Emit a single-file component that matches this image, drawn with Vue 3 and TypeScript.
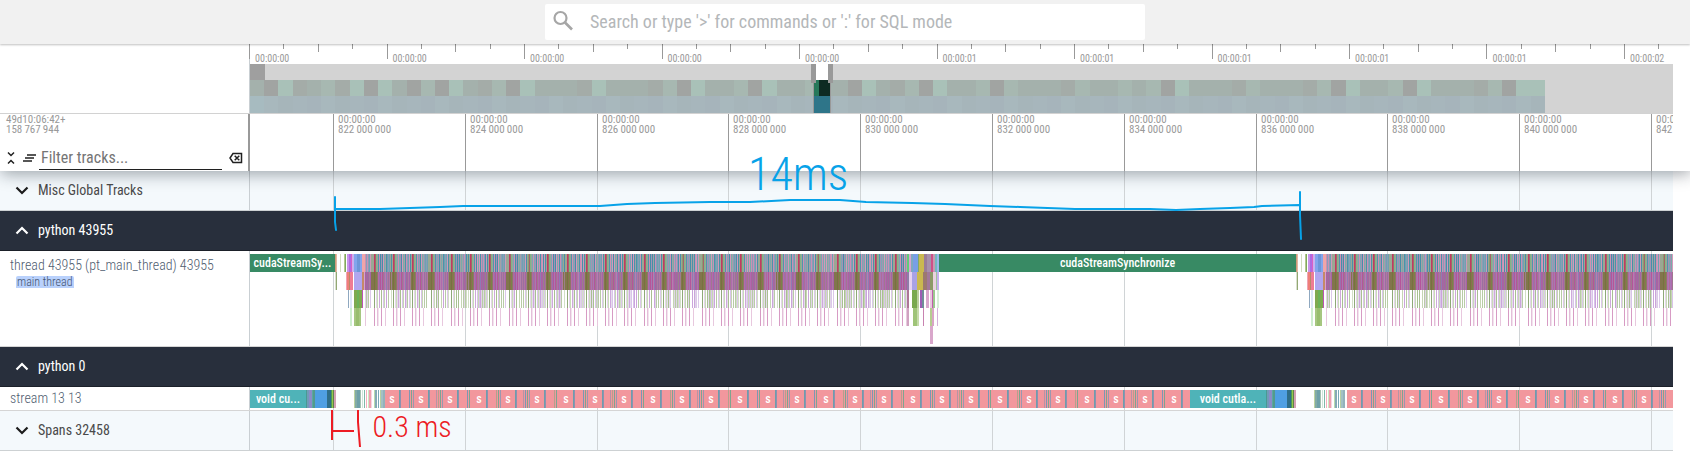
<script setup lang="ts">
import { ref } from 'vue'

interface Slice { from: number; to: number; color: string; label?: string }
interface Shape { color: string; d: string }

const START = 250
const SPAN = 1423
const pct = (x: number): string => `${((x - START) / SPAN) * 100}%`

const query = ref('')
const filter = ref('')

/* overview ruler */
const overviewTicks = Array.from({ length: 42 }, (_, i) => ({
  x: 249 + i * 34.375,
  size: i % 4 === 0 ? 'major' : i % 2 === 0 ? 'half' : 'minor',
  label: i % 4 === 0 ? (i < 20 ? '00:00:00' : i < 40 ? '00:00:01' : '00:00:02') : '',
})).filter((t) => t.x < 1672)

/* main ruler */
const marks = Array.from({ length: 11 }, (_, i) => ({
  x: Math.floor(333.5 + i * 131.8),
  ns: `${822 + i * 2}\u2009000\u2009000`,
}))

/* minimap heat cells */
const cpuLevels = '204123140420304213042221422213042230' + '4223220421304223032221322323' + '042221322213042230422213044'
const greens = ['#a1a4a2', '#a4aca8', '#a4b1ac', '#a7b8b1', '#a9c1b8']
const blues = ['#a7bbc0', '#a6b4bb', '#a7b6bc', '#a6b5ba', '#a8b8bd']
const cells = Array.from({ length: 91 }, (_, i) => ({
  x: i * 14.23,
  green: greens[Number(cpuLevels[i])],
  blue: blues[i === 0 ? 0 : 1 + ((i * 7) % 4)],
}))

/* dense slices are painted as one path per colour */
class Painter {
  private shapes = new Map<string, string>()
  rect(x: number, y: number, w: number, color: string): void {
    this.shapes.set(color, `${this.shapes.get(color) ?? ''}M${x - START} ${y}h${w}v18h${-w}z`)
  }
  list(): Shape[] {
    return [...this.shapes].map(([color, d]) => ({ color, d }))
  }
}

const noise = (n: number): number => {
  const v = Math.sin(n * 12.9898) * 43758.5453
  return v - Math.floor(v)
}

const depth0 = ['#c23a60', '#a8606c', '#7fb884', '#9aa39c', '#4f97ab', '#d08fb4', '#7aa9b3', '#a491b5', '#4590a8', '#d597bb',
  '#79aca8', '#a3a1a6', '#4a93aa', '#c991b5', '#8a9cb8', '#6fa2b0', '#cf9ab8', '#4a8fa8', '#9aa893']
const depth1 = ['#75743f', '#8c6e50', '#7b8348', '#8f7468', '#b56aa8', '#9a70ac', '#b06a9a', '#a878b2', '#b4559a', '#9f7890',
  '#b06aae', '#b480ac', '#8f7ab4', '#ac62a0', '#9a70a0', '#b078a0', '#a563a8', '#9c7f88', '#82754c']
const depth2 = ['#8fa878', '', '#e4d5ea', '#c9dbb8', '', '#cfa8dc', '#e6dced', '#a9bf92', '', '#d9c4ea',
  '#c6d5b4', '', '#cba4dc', '#e0d6e6', '#b8cba6', '', '#dcc8ea', '#d2dfc6', '']
const depth3 = ['#d79bc4', '', '', '#e3bfd9', '#f3e2ee', '', '', '#d79bc4', '', '',
  '', '#e8c8de', '', '', '', '', '', '', '']

const calls = new Painter()

function paintBurst(base: number, end: number): void {
  const lead: [number, number, number, string][] = [
    [0, 0, 1, '#cf9a7c'], [1, 0, 1, '#e0b8a0'], [5, 0, 1, '#d3dec0'], [9, 0, 1, '#b5c88f'], [10, 0, 1, '#7fa860'],
    [12, 0, 2, '#c893ec'], [14, 0, 2, '#b06ae0'], [16, 0, 1, '#da5fc5'], [17, 0, 2, '#cbb0ef'],
    [19, 0, 8, '#82a5ec'], [22, 0, 3, '#6d96d8'], [27, 0, 3, '#f0a5a8'],
    [0, 18, 1, '#d9e0cf'], [1, 18, 1, '#93a873'], [11, 18, 1, '#f0a3b5'], [12, 18, 2, '#ee7f78'], [14, 18, 1, '#b8896c'], [15, 18, 3, '#ef7c94'],
    [19, 18, 8, '#b1a6ef'], [27, 18, 2, '#c58a68'], [29, 18, 1, '#d6a0d0'],
    [13, 36, 1, '#8fa8c0'], [15, 36, 2, '#dce6f6'], [19, 36, 8, '#7fa950'], [22, 36, 2, '#6bb258'], [27, 36, 1, '#bc55b5'],
    [15, 54, 2, '#cfeed0'], [19, 54, 7, '#a6c680'], [21, 54, 3, '#98bd6e'],
  ]
  for (const [dx, y, w, color] of lead) calls.rect(base + dx, y, w, color)
  for (let x = base + 30; x < end; x++) {
    const i = x - base - 35 + 190
    const phase = Math.floor(i % 19.3)
    const r = noise(x - base)
    const shift = r > 0.72 && phase > 3 ? 2 : 0
    const k = Math.min(18, phase + shift)
    calls.rect(x, 0, 1, phase === 0 && r < 0.25 ? '#8a9c70' : depth0[k])
    calls.rect(x, 18, 1, depth1[k])
    if (depth2[k]) calls.rect(x, 36, 1, depth2[k])
    if (depth3[phase]) calls.rect(x, 54, 1, depth3[phase])
  }
}

paintBurst(335, 907)
paintBurst(1296, 1673)
const tail: [number, number, number, string][] = [
  [907, 0, 2, '#5fcf78'], [909, 0, 2, '#d7a5d0'], [911, 0, 2, '#7faabf'], [913, 0, 5, '#789fe6'], [918, 0, 1, '#7fa96a'],
  [919, 0, 5, '#cab950'], [924, 0, 3, '#9b7d98'], [927, 0, 4, '#a791ac'], [931, 0, 2, '#cf4f88'], [933, 0, 2, '#c79ab0'],
  [935, 0, 2, '#73b8c0'], [937, 0, 2, '#9ab8ea'],
  [907, 18, 2, '#8f7da8'], [909, 18, 3, '#e6d3f1'], [912, 18, 5, '#a9a2e6'], [917, 18, 6, '#cab950'], [923, 18, 4, '#9c7a70'],
  [927, 18, 3, '#a2789a'], [930, 18, 3, '#8d9a68'], [933, 18, 3, '#ead2df'], [936, 18, 1, '#9cc59c'], [937, 18, 2, '#c7b0ee'],
  [907, 36, 2, '#ad7597'], [912, 36, 5, '#79a94e'], [917, 36, 2, '#b9cf9b'], [920, 36, 2, '#9c5db4'], [922, 36, 2, '#6f8d98'],
  [926, 36, 3, '#d8a7cd'], [930, 36, 2, '#eac6e0'], [932, 36, 1, '#c05faa'], [933, 36, 2, '#9dc88f'], [937, 36, 2, '#d8efd8'],
  [907, 54, 2, '#cfa2c0'], [913, 54, 4, '#9fc478'], [917, 54, 2, '#c5dba9'], [923, 54, 1, '#c882b0'], [930, 54, 2, '#b5cc90'],
  [932, 54, 2, '#d9a4c7'], [937, 54, 1, '#d5b0dc'], [930, 72, 3, '#d9a7cb'],
]
for (const [x, y, w, color] of tail) calls.rect(x, y, w, color)
const callShapes = calls.list()

const callSlices: Slice[] = [
  { from: 250, to: 335, color: '#388a64', label: 'cudaStreamSy...' },
  { from: 939, to: 1296, color: '#388a64', label: 'cudaStreamSynchronize' },
]

/* gpu stream */
const stream = new Painter()
const streamSlices: Slice[] = [
  { from: 250, to: 306, color: '#4fb3b8', label: 'void cu...' },
  { from: 1190, to: 1266, color: '#4fb3b8', label: 'void cutla...' },
]
for (const x of [306, 1266]) {
  const parts: [number, number, string][] = [
    [0, 1, '#4a9a92'], [1, 2, '#719bb8'], [3, 3, '#8b8bc8'], [6, 1, '#5aa8a0'], [7, 2, '#539a8c'],
    [9, 12, '#4f9fe3'], [21, 4, '#2f6d88'], [25, 1, '#4b9a58'], [26, 1, '#93c84a'], [27, 1, '#62804d'], [28, 2, '#d4a2b4'],
    [48, 1, '#bdd29f'], [49, 2, '#83aba5'], [51, 3, '#6fa0a8'], [54, 1, '#a3c0b0'],
    [56, 1, '#cfe6da'], [58, 1, '#7fb8a8'], [60, 1, '#f5b0bd'], [62, 1, '#cde8c0'], [63, 2, '#f09fb0'], [65, 1, '#f6d7e2'],
    [68, 1, '#b9dcb0'], [69, 2, '#85a9b6'], [72, 1, '#77a9b8'], [74, 1, '#b8cfa0'], [75, 2, '#a2c0c4'], [77, 2, '#93b2bc'],
  ]
  for (const [dx, w, color] of parts) stream.rect(x + dx, 0, w, color)
}

function paintKernels(base: number, end: number, count: number): void {
  stream.rect(base, 0, end - base, '#f2979d')
  for (let n = 0; n < count; n++) {
    const x = Math.round(base + n * 28.96)
    streamSlices.push({ from: x, to: x + 14, color: '#f2979d', label: 's' })
    stream.rect(x + 14, 0, 1, '#6d9eab')
    stream.rect(x + 15, 0, 1, '#8b92b0')
    if (n % 3 === 1) stream.rect(x + 22, 0, 1, '#b794a5')
    if (x + 28 >= end) break
    stream.rect(x + 24, 0, 1, n % 2 ? '#b5a08c' : '#7d96b5')
    stream.rect(x + 26, 0, 1, '#7fa58f')
    if (n % 3 !== 2) stream.rect(x + 28, 0, 1, '#9a98b0')
  }
}
paintKernels(385, 1190, 28)
paintKernels(1347, 1673, 11)
const streamShapes = stream.list()

const box = (s: Slice) => ({ left: pct(s.from), width: `${((s.to - s.from) / SPAN) * 100}%`, background: s.color })
</script>

<template>
  <div class="app">
    <header class="topbar">
      <label class="search">
        <svg viewBox="0 0 24 24" class="search-icon" aria-hidden="true">
          <circle cx="9.5" cy="9" r="6" fill="none" stroke="currentColor" stroke-width="2.2" />
          <path d="M14 13.500l7 7" fill="none" stroke="currentColor" stroke-width="2.6" />
        </svg>
        <input v-model="query" type="text" aria-label="Search" placeholder="Search or type '>' for commands or ':' for SQL mode">
      </label>
    </header>

    <section class="row overview">
      <div class="shell"></div>
      <div class="content">
        <div class="ruler">
          <div v-for="t in overviewTicks" :key="t.x" class="tick" :class="t.size" :style="{ left: pct(t.x) }">
            <span v-if="t.label">{{ t.label }}</span>
          </div>
        </div>
        <div class="minimap">
          <svg viewBox="0 0 1423 49" preserveAspectRatio="none" shape-rendering="crispEdges" aria-hidden="true">
            <rect width="15" height="16" fill="#9f9f9f" />
            <template v-for="c in cells" :key="c.x">
              <rect :x="c.x" y="16" width="14.4" height="16" :fill="c.green" />
              <rect :x="c.x" y="32" width="14.4" height="17" :fill="c.blue" />
            </template>
            <rect x="566" width="12" height="16" fill="#fff" />
            <rect x="564" y="16" width="5" height="16" fill="#27785a" />
            <rect x="569" y="16" width="11" height="16" fill="#0e2b23" />
            <rect x="564" y="32" width="16" height="17" fill="#2e7589" />
            <path d="M561 0h5v19h-5zM578 0h5v19h-5zM563 19h1v30h-1zM580 19h1v30h-1z" fill="#999" />
          </svg>
        </div>
      </div>
    </section>

    <section class="row axis">
      <div class="shell">
        <div class="origin">49d10:06:42+<br>158&#8201;767&#8201;944</div>
        <div class="filter">
          <button type="button" aria-label="Collapse all">
            <svg viewBox="0 0 16 16"><path d="M5 2.5l3 3 3-3M5 13.5l3-3 3 3" fill="none" stroke="currentColor" stroke-width="1.5" /></svg>
          </button>
          <button type="button" aria-label="Clear pinned tracks">
            <svg viewBox="0 0 16 16"><path d="M6 5h9M4 8h9M2 11h9" fill="none" stroke="currentColor" stroke-width="1.5" /></svg>
          </button>
          <input v-model="filter" type="text" aria-label="Filter tracks" placeholder="Filter tracks...">
          <button type="button" aria-label="Clear filter" class="clear">
            <svg viewBox="0 0 16 16"><path d="M5 3.5h8.500v9H5L2 8zM6.700 5.700l4.600 4.600M11.300 5.700l-4.600 4.600" fill="none" stroke="currentColor" stroke-width="1.5" /></svg>
          </button>
        </div>
      </div>
      <div class="content">
        <div v-for="m in marks" :key="m.x" class="mark" :style="{ left: pct(m.x) }">00:00:00<br>{{ m.ns }}</div>
      </div>
    </section>

    <main class="tracks">
      <section class="row group light">
        <div class="shell">
          <button type="button" class="toggle" aria-expanded="false">
            <svg viewBox="0 0 16 16"><path d="M2.5 5.500l5.500 5.500 5.500-5.500" fill="none" stroke="currentColor" stroke-width="2.2" /></svg>
            Misc Global Tracks
          </button>
        </div>
        <div class="content"><i v-for="m in marks" :key="m.x" class="gridline" :style="{ left: pct(m.x) }"></i></div>
      </section>

      <section class="row group dark">
        <button type="button" class="toggle" aria-expanded="true">
          <svg viewBox="0 0 16 16"><path d="M2.5 11.500L8 6l5.500 5.500" fill="none" stroke="currentColor" stroke-width="2.2" /></svg>
          python 43955
        </button>
      </section>

      <section class="row track thread">
        <div class="shell">
          <h2>thread 43955 (pt_main_thread) 43955</h2>
          <span class="chip">main thread</span>
        </div>
        <div class="content">
          <i v-for="m in marks" :key="m.x" class="gridline" :style="{ left: pct(m.x) }"></i>
          <div class="lane deep">
            <svg viewBox="0 0 1423 90" preserveAspectRatio="none" shape-rendering="crispEdges" aria-hidden="true">
              <path v-for="s in callShapes" :key="s.color" :d="s.d" :fill="s.color" />
            </svg>
            <div v-for="s in callSlices" :key="s.from" class="slice" :style="box(s)">{{ s.label }}</div>
          </div>
        </div>
      </section>

      <section class="row group dark">
        <button type="button" class="toggle" aria-expanded="true">
          <svg viewBox="0 0 16 16"><path d="M2.5 11.500L8 6l5.500 5.500" fill="none" stroke="currentColor" stroke-width="2.2" /></svg>
          python 0
        </button>
      </section>

      <section class="row track">
        <div class="shell"><h2>stream 13 13</h2></div>
        <div class="content">
          <i v-for="m in marks" :key="m.x" class="gridline" :style="{ left: pct(m.x) }"></i>
          <div class="lane">
            <svg viewBox="0 0 1423 18" preserveAspectRatio="none" shape-rendering="crispEdges" aria-hidden="true">
              <path v-for="s in streamShapes" :key="s.color" :d="s.d" :fill="s.color" />
            </svg>
            <div v-for="s in streamSlices" :key="s.from" class="slice" :style="box(s)">{{ s.label }}</div>
          </div>
        </div>
      </section>

      <section class="row group light">
        <div class="shell">
          <button type="button" class="toggle" aria-expanded="false">
            <svg viewBox="0 0 16 16"><path d="M2.5 5.500l5.500 5.500 5.500-5.500" fill="none" stroke="currentColor" stroke-width="2.2" /></svg>
            Spans 32458
          </button>
        </div>
        <div class="content"><i v-for="m in marks" :key="m.x" class="gridline" :style="{ left: pct(m.x) }"></i></div>
      </section>
    </main>

    <div class="notes">
      <svg viewBox="0 0 1423 460" preserveAspectRatio="none" aria-hidden="true">
        <g fill="none" stroke="#07a2e8" stroke-width="2" stroke-linecap="round" stroke-linejoin="round">
          <path d="M85 197V222L86 230M86 209H130L160 208L190 207L213 206H350L377 204L405 203L460 202H500L540 200H590L616 202L662 203L695 204L740 206L770 207L825 209H900L926 210L950 209L980 208L1004 207L1012 206L1050 205V207" />
          <path d="M1050 192V215L1051 239" />
        </g>
        <g fill="none" stroke="#ed1c24" stroke-width="2">
          <path d="M82 410V440M82 431H104M108 410V422L110 447" />
        </g>
      </svg>
      <span class="note total">14ms</span>
      <span class="note gap">0.3 ms</span>
    </div>
  </div>
</template>

<style>
body {
  margin: 0;
  background: #fff;
}
</style>

<style scoped>
.app {
  position: relative;
  overflow: hidden;
  min-height: 100vh;
  font-family: "Roboto Condensed", Roboto, sans-serif;
  color: #3c4b5d;
}
button,
input {
  font: inherit;
  color: inherit;
  border: 0;
  padding: 0;
  margin: 0;
  background: none;
  outline: none;
}
svg {
  display: block;
}
.topbar {
  position: relative;
  z-index: 3;
  display: flex;
  justify-content: center;
  align-items: flex-start;
  box-sizing: border-box;
  height: 44px;
  padding-top: 4px;
  background: #f1f1f1;
  box-shadow: 0 1px 2px rgba(0, 0, 0, 0.25);
}
.search {
  display: flex;
  align-items: center;
  gap: 15px;
  box-sizing: border-box;
  width: 600px;
  max-width: 100%;
  height: 36px;
  padding: 0 6px 2px;
  border-radius: 2px;
  background: #fff;
}
.search-icon {
  width: 24px;
  height: 24px;
  color: #a6a6a6;
}
.search input {
  flex: 1;
  font-size: 18px;
}
.search input::placeholder {
  color: #b4b7b9;
  opacity: 1;
}
.row {
  display: grid;
  grid-template-columns: 249px 1fr;
  margin-right: 17px;
}
.shell {
  min-width: 0;
}
.content {
  position: relative;
  min-width: 0;
  overflow: hidden;
  border-left: 1px solid #c9cfd3;
}
.overview {
  border-bottom: 1px solid #d2d2d2;
}
.overview .content {
  overflow: visible;
}
.ruler {
  position: relative;
  height: 20px;
}
.tick {
  position: absolute;
  top: 0;
  width: 1px;
  height: 5px;
  background: #999;
}
.tick.half {
  height: 8px;
}
.tick.major {
  height: 15px;
}
.tick span {
  position: absolute;
  left: 6px;
  top: 9px;
  font-size: 10px;
  line-height: 12px;
  color: #999;
}
.minimap {
  background: #d3d3d3;
}
.minimap svg {
  width: 100%;
  height: 49px;
}
.axis {
  position: relative;
  z-index: 2;
  margin-right: 0;
  padding-right: 17px;
  background: #fff;
  box-shadow: 1px 3px 15px rgba(23, 32, 44, 0.4);
  clip-path: inset(0 0 -30px 0);
}
.axis .shell {
  display: flex;
  flex-direction: column;
  justify-content: space-between;
  height: 57px;
}
.axis .content {
  border-left: 2px solid #999;
  margin-left: -1px;
}
.origin,
.mark {
  font-size: 11px;
  line-height: 10px;
  color: #999;
  white-space: nowrap;
}
.origin {
  padding: 1px 6px;
}
.mark {
  position: absolute;
  top: 0;
  bottom: 0;
  padding: 1px 0 0 4px;
  border-left: 1px solid #999;
}
.filter {
  display: flex;
  align-items: center;
  gap: 2px;
  padding: 0 5px 1px 3px;
  color: #202020;
}
.filter button,
.filter svg {
  width: 16px;
  height: 16px;
}
.filter input {
  flex: 1;
  min-width: 0;
  height: 23px;
  margin-right: 4px;
  padding-left: 2px;
  border-bottom: 1px solid #202020;
  font-size: 16px;
}
.filter input::placeholder {
  color: #757575;
  opacity: 1;
}
.group {
  height: 39px;
  border-bottom: 1px solid #cdd1d3;
}
.group.light {
  background: #f4f9fc;
}
.group.dark {
  background: #282f3c;
  border-bottom-color: #1b2029;
  color: #fff;
}
.toggle {
  display: flex;
  align-items: center;
  gap: 8px;
  height: 38px;
  padding-left: 14px;
  font-size: 14px;
  white-space: nowrap;
}
.toggle svg {
  width: 16px;
  height: 16px;
}
.light .toggle {
  color: #4a4a4a;
}
.light .toggle svg {
  color: #1c1c1c;
}
.track {
  border-bottom: 1px solid #d5d5d5;
}
.track.thread {
  min-height: 95px;
}
h2 {
  margin: 0;
  padding: 1px 0 0 10px;
  font-size: 14px;
  line-height: 20px;
  font-weight: 300;
  color: #4f5d70;
  white-space: nowrap;
}
.thread h2 {
  padding: 4px 0 1px 10px;
}
.chip {
  display: block;
  width: max-content;
  height: 12px;
  margin-left: 16px;
  padding: 0 1px;
  border-radius: 2px 2px 0 0;
  background: #b9d1fc;
  font-size: 12px;
  font-weight: 300;
  line-height: 12px;
  color: #44546f;
}
.gridline {
  position: absolute;
  top: 0;
  bottom: 0;
  width: 1px;
  background: #d0d4d6;
}
.lane {
  position: relative;
  height: 18px;
  margin: 3px 0 2px;
}
.lane.deep {
  height: 90px;
}
.lane svg {
  width: 100%;
  height: 100%;
}
.slice {
  position: absolute;
  top: 0;
  height: 18px;
  overflow: hidden;
  white-space: nowrap;
  text-align: center;
  font-size: 12px;
  line-height: 18px;
  font-weight: 500;
  color: #fff;
}
.notes {
  position: absolute;
  z-index: 4;
  top: 0;
  left: 250px;
  right: 17px;
  height: 460px;
  pointer-events: none;
}
.notes svg {
  width: 100%;
  height: 460px;
}
.note {
  position: absolute;
  white-space: nowrap;
}
.total {
  left: 35%;
  top: 150px;
  font-size: 46px;
  line-height: 48px;
  font-weight: 300;
  color: #07a2e8;
}
.gap {
  left: 8.6%;
  top: 411px;
  font-size: 30px;
  line-height: 32px;
  font-weight: 300;
  color: #ed1c24;
}
</style>
